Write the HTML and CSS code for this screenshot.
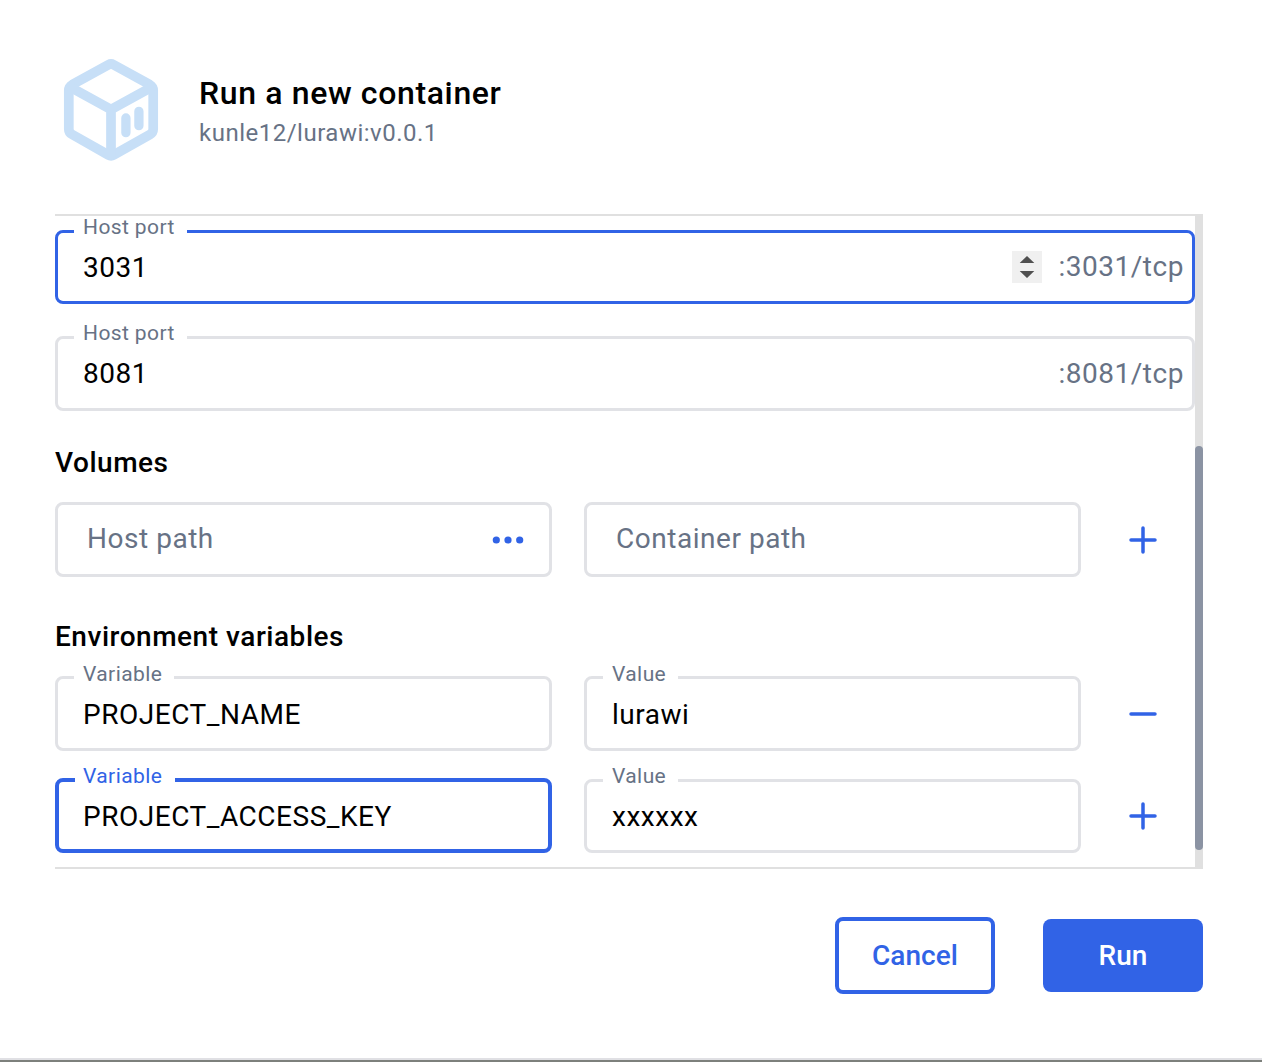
FILE: index.html
```html
<!DOCTYPE html>
<html lang="en">
<head>
<meta charset="utf-8">
<title>Run a new container</title>
<link rel="stylesheet" href="styles.css">
</head>
<body>
<main class="dialog">
  <header class="header">
    <svg class="logo" width="96" height="104" viewBox="13 8 96 104" fill="none" stroke="#c7dff7" stroke-width="9.7" stroke-linejoin="round" stroke-linecap="round">
      <path d="M58.4 14.7Q61 13.3 63.6 14.7L99.6 34.6Q103.2 36.8 103.2 40.5V79Q103.2 82.6 100 84.4L63.6 105Q61 106.5 58.4 105L22 84.4Q18.8 82.6 18.8 79V40.5Q18.8 36.8 22.4 34.6Z"/>
      <path d="M20.5 37.3 61 59.5 101.5 37.3M61 59.5V105"/>
      <path stroke-width="9.3" d="M75.9 68V82.7M88.9 61.4V75.7"/>
    </svg>
    <div class="heading">
      <h1 class="title">Run a new container</h1>
      <p class="image-name">kunle12/lurawi:v0.0.1</p>
    </div>
  </header>

  <section class="scroll-area">
    <div class="content">
      <div class="field port focused">
        <label class="label">Host port</label>
        <span class="value">3031</span>
        <span class="spinner"><svg width="30" height="32" viewBox="0 0 30 32" fill="#505050"><path d="M15 5 22.3 12H7.7ZM15 27 7.7 20H22.3Z"/></svg></span>
        <span class="suffix">:3031/tcp</span>
      </div>
      <div class="field port second">
        <label class="label">Host port</label>
        <span class="value">8081</span>
        <span class="suffix">:8081/tcp</span>
      </div>

      <h2 class="section-title volumes">Volumes</h2>
      <div class="row">
        <div class="field empty">
          <span class="placeholder">Host path</span>
          <svg class="dots" width="32" height="8" viewBox="0 0 32 8" fill="#3163e6"><circle cx="4.3" cy="4" r="3.6"/><circle cx="16" cy="4" r="3.6"/><circle cx="27.7" cy="4" r="3.6"/></svg>
        </div>
        <div class="field empty"><span class="placeholder">Container path</span></div>
        <button class="icon-button" aria-label="Add volume"><svg width="28" height="28" viewBox="0 0 28 28"><path d="M2 14H26M14 2V26"/></svg></button>
      </div>

      <h2 class="section-title environment">Environment variables</h2>
      <div class="row">
        <div class="field filled-in"><label class="label variable">Variable</label><span class="value">PROJECT_NAME</span></div>
        <div class="field filled-in"><label class="label short">Value</label><span class="value">lurawi</span></div>
        <button class="icon-button" aria-label="Remove variable"><svg width="28" height="28" viewBox="0 0 28 28"><path d="M2 14H26"/></svg></button>
      </div>
      <div class="row last">
        <div class="field filled-in active"><label class="label variable">Variable</label><span class="value">PROJECT_ACCESS_KEY</span></div>
        <div class="field lower"><label class="label short">Value</label><span class="value">xxxxxx</span></div>
        <button class="icon-button" aria-label="Add variable"><svg width="28" height="28" viewBox="0 0 28 28"><path d="M2 14H26M14 2V26"/></svg></button>
      </div>
    </div>
    <div class="scrollbar"><div class="thumb"></div></div>
  </section>

  <footer class="actions">
    <button class="button outlined">Cancel</button>
    <button class="button filled">Run</button>
  </footer>
  <div class="bottom-edge"></div>
</main>
</body>
</html>
```
FILE: styles.css
```css
* { box-sizing: border-box; }

body {
  margin: 0;
  background: #fff;
  color: #000;
  font-family: Roboto, "Liberation Sans", sans-serif;
  font-size: 28px;
  letter-spacing: 0.53px;
}

h1, h2, p { margin: 0; }

button { font: inherit; letter-spacing: inherit; padding: 0; cursor: pointer; }

.dialog {
  display: flex;
  flex-direction: column;
  width: 1262px;
  height: 1062px;
}

.header {
  display: flex;
  height: 214px;
  padding: 58px 63px 0;
}

.logo { flex: none; }

.heading { padding: 15px 0 0 40px; }

.title {
  font-size: 32px;
  font-weight: 500;
  line-height: 40px;
  letter-spacing: 0.63px;
}

.image-name {
  color: #677285;
  font-size: 24px;
  line-height: 40px;
  letter-spacing: 0.5px;
}

.scroll-area {
  display: flex;
  width: 1148px;
  height: 655px;
  margin-left: 55px;
}

.content {
  width: 1140px;
  padding-top: 14px;
  border-top: 2px solid #e0e0e0;
  border-bottom: 2px solid #e0e0e0;
}

.scrollbar {
  width: 8px;
  padding-top: 232px;
  background: #e0e0e0;
}

.thumb {
  height: 404px;
  border-radius: 4px;
  background: #8b93a3;
}

.field {
  position: relative;
  display: flex;
  align-items: center;
  height: 75px;
  padding-left: 25px;
  border: 3px solid #e1e2e6;
  border-radius: 8px;
}

.field.focused { height: 74px; border-color: #3163e6; }

.field.focused .suffix { padding-bottom: 2px; }

.field.second { margin-top: 32px; }

.field.filled-in { padding-top: 1px; }

.field.active { border: 4px solid #3163e6; padding-left: 24px; }

.field.active .label { left: 16px; padding-left: 8px; top: -17px; width: 100px; color: #3163e6; }

.field.lower { height: 74px; margin-top: 1px; }

.field.lower .label { top: -17px; }

.field.empty { padding: 0 25px 3px 29px; justify-content: space-between; }

.label {
  position: absolute;
  left: 16px;
  top: -16px;
  width: 113px;
  padding-left: 9px;
  background: #fff;
  color: #677285;
  font-size: 21px;
  line-height: 22px;
  letter-spacing: 0.4px;
  white-space: nowrap;
}

.port .label { top: -17px; }

.label.variable { width: 100px; }

.label.short { width: 75px; }

.value { flex: 1; }

.spinner {
  width: 30px;
  height: 32px;
  margin-right: 16px;
  background: #f0f0f0;
}

.spinner svg { display: block; }

.suffix { padding-right: 8px; color: #677285; }

.placeholder { color: #677285; }

.dots { margin-top: 3px; }

.section-title {
  font-size: 28px;
  font-weight: 500;
  line-height: 36px;
}

.volumes { margin-top: 34px; }

.environment { margin-top: 42px; }

.row {
  display: grid;
  grid-template-columns: 497px 497px 60px;
  column-gap: 32px;
  margin-top: 21px;
}

.row.last { margin-top: 27px; }

.icon-button {
  display: grid;
  place-items: center;
  border: 0;
  background: none;
}

.icon-button path {
  stroke: #3163e6;
  stroke-width: 3.5;
  stroke-linecap: round;
}

.actions {
  display: flex;
  justify-content: flex-end;
  align-items: center;
  gap: 48px;
  height: 77px;
  margin: 48px 59px 0 0;
}

.button {
  width: 160px;
  border-radius: 8px;
  font-weight: 500;
  letter-spacing: 0.05px;
}

.outlined {
  height: 77px;
  border: 4px solid #3163e6;
  background: #fff;
  color: #3163e6;
}

.filled {
  height: 73px;
  border: 0;
  background: #3163e6;
  color: #fff;
}

.bottom-edge {
  height: 4px;
  margin-top: auto;
  border-top: 2px solid #e0e0e4;
  background: #7d807c;
}
```
